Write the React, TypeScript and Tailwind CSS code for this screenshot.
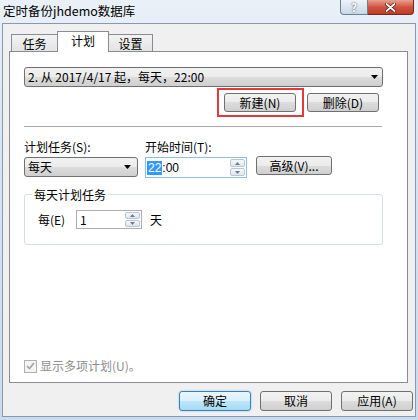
import React from 'react';

const Arrow = () => (
    <svg width="7" height="4" viewBox="0 0 7 4" className="shrink-0">
        <path d="M0 0 H7 L3.5 4 Z" fill="#000" />
    </svg>
);

const Spinner = () => (
    <div className="flex h-full w-[16px] flex-col gap-px py-px pr-px">
        <div className="flex flex-1 items-center justify-center rounded-[2px] border border-[#b9c4d4] bg-[linear-gradient(#f6f8fb,#dfe5ee)]">
            <svg width="5" height="3" viewBox="0 0 5 3"><path d="M0 3 L2.5 0 L5 3 Z" fill="#6a7c98" /></svg>
        </div>
        <div className="flex flex-1 items-center justify-center rounded-[2px] border border-[#b9c4d4] bg-[linear-gradient(#f6f8fb,#dfe5ee)]">
            <svg width="5" height="3" viewBox="0 0 5 3"><path d="M0 0 L2.5 3 L5 0 Z" fill="#6a7c98" /></svg>
        </div>
    </div>
);

const Button = ({ children, className = '', primary = false }: { children: React.ReactNode; className?: string; primary?: boolean }) => (
    <div
        className={`flex w-[72px] items-center justify-center rounded-[3px] border text-[12px] text-black ${
            primary
                ? 'border-[#3c7fb1] bg-[linear-gradient(#eaf6fd_0%,#d9f0fc_50%,#bee6fd_50%,#a7d9f5_100%)] shadow-[0_0_2px_#7cc4f0]'
                : 'border-[#707070] bg-[linear-gradient(#f2f2f2_0%,#ebebeb_50%,#dddddd_50%,#cfcfcf_100%)]'
        } ${className}`}
    >
        {children}
    </div>
);

export default function App() {
    return (
        <div className="flex h-[420px] w-[418px] flex-col overflow-hidden bg-[linear-gradient(180deg,#e9f0f8_0%,#d6e3f1_40%,#c9dbee_100%)] font-['Noto_Sans_CJK_SC',sans-serif] text-[12px] leading-[14px]">
            {/* title bar */}
            <div className="flex h-[23px] shrink-0 items-start justify-between">
                <div className="pl-[3px] pt-[3px] text-[12.5px] leading-[16px] text-black">定时备份jhdemo数据库</div>
                <div className="mr-[4px] flex h-[15px]">
                    <div className="flex w-[28px] items-center justify-center rounded-bl-[4px] border border-t-0 border-[#6f7f92] bg-[linear-gradient(#eef3f9,#c9d7e8)] text-[11px] font-bold leading-none text-white [text-shadow:0_0_2px_#333]">
                        ?
                    </div>
                    <div className="flex w-[46px] items-center justify-center rounded-br-[4px] border border-l-0 border-t-0 border-[#6b2a20] bg-[linear-gradient(#e8a091,#d0533f_50%,#c23b25_100%)]">
                        <svg width="11" height="9" viewBox="0 0 11 9">
                            <path d="M1.5 1 L9.5 8 M9.5 1 L1.5 8" stroke="#3a1a14" strokeWidth="3.2" strokeLinecap="round" />
                            <path d="M1.5 1 L9.5 8 M9.5 1 L1.5 8" stroke="#fff" strokeWidth="1.8" strokeLinecap="round" />
                        </svg>
                    </div>
                </div>
            </div>

            {/* client area */}
            <div className="mb-[3px] ml-[2px] flex w-[414px] flex-1 flex-col border border-[#8899ad] bg-[#f0f0f0]">
                {/* tabs */}
                <div className="ml-[6px] mt-[7px] flex h-[20px] items-end pl-[2px]">
                    <div className="flex h-[17px] w-[47px] items-center justify-center border border-b-0 border-[#898c95] bg-[linear-gradient(#f3f3f3,#e3e3e3)] pt-[2px] text-black">任务</div>
                    <div className="relative z-10 -mb-px -ml-px flex h-[21px] w-[52px] items-center justify-center border border-b-0 border-[#898c95] bg-white pb-[2px] text-black">计划</div>
                    <div className="-ml-px flex h-[17px] w-[45px] items-center justify-center border border-b-0 border-[#898c95] bg-[linear-gradient(#f3f3f3,#e3e3e3)] pt-[2px] text-black">设置</div>
                </div>

                {/* panel */}
                <div className="ml-[6px] flex h-[332px] w-[399px] flex-col border border-[#898c95] bg-white pl-[14px]">
                    <div className="mt-[15px] flex h-[20px] w-[359px] items-center justify-between rounded-[3px] border border-[#707070] bg-[linear-gradient(#f2f2f2_0%,#ebebeb_50%,#dddddd_50%,#cfcfcf_100%)] pl-[3px] pr-[4px]">
                        <span>2. 从 2017/4/17 起，每天，22:00</span>
                        <Arrow />
                    </div>

                    <div className="mt-px flex h-[29px] items-center">
                        <div className="ml-[193px] flex h-[29px] w-[87px] border-2 border-[#e33b3b] pb-[3px] pl-[5px] pr-[6px] pt-[3px]">
                            <Button className="h-[19px]">新建(N)</Button>
                        </div>
                        <Button className="ml-[3px] h-[19px]">删除(D)</Button>
                    </div>

                    <div className="mt-[9px] h-px w-[358px] bg-[#a9a9a9]" />

                    <div className="mt-[13px] flex text-black">
                        <span className="w-[121px]">计划任务(S):</span>
                        <span>开始时间(T):</span>
                    </div>

                    <div className="mt-[3px] flex items-start">
                        <div className="flex h-[20px] w-[114px] items-center justify-between rounded-[3px] border border-[#707070] bg-[linear-gradient(#f2f2f2_0%,#ebebeb_50%,#dddddd_50%,#cfcfcf_100%)] pl-[3px] pr-[6px]">
                            <span>每天</span>
                            <Arrow />
                        </div>
                        <div className="ml-[7px] flex h-[21px] w-[102px] items-center justify-between border border-[#8ebde8] bg-white">
                            <div className="flex items-center pl-[1px] font-['Liberation_Sans',sans-serif] text-[12px]">
                                <span className="bg-[#3399ff] px-px text-white">22</span>
                                <span className="text-black">:00</span>
                            </div>
                            <Spinner />
                        </div>
                        <Button className="-mt-px ml-[9px] h-[19px] w-[76px]">高级(V)...</Button>
                    </div>

                    <div className="relative mt-[16px] h-[51px] w-[359px] rounded-[3px] border border-[#d5dfe5] pl-[13px] pt-[15px]">
                        <span className="absolute -top-[7px] left-[7px] bg-white px-[2px] text-black">每天计划任务</span>
                        <div className="flex items-center">
                            <span className="w-[38px]">每(E)</span>
                            <div className="flex h-[19px] w-[66px] items-center justify-between border border-[#abadb3] bg-white pl-[3px]">
                                <span>1</span>
                                <Spinner />
                            </div>
                            <span className="ml-[8px]">天</span>
                        </div>
                    </div>

                    <div className="mb-[9px] mt-auto flex items-center">
                        <div className="flex h-[13px] w-[13px] items-center justify-center border border-[#b1b1b1] bg-[#f4f4f4]">
                            <svg width="9" height="8" viewBox="0 0 9 8">
                                <path d="M1 4 L3.5 6.5 L8 1" fill="none" stroke="#a3a3a3" strokeWidth="1.6" />
                            </svg>
                        </div>
                        <span className="ml-[3px] text-[#8d8d8d]">显示多项计划(U)。</span>
                    </div>
                </div>

                {/* dialog buttons */}
                <div className="ml-[176px] mt-[8px] flex h-[20px] gap-[9px]">
                    <Button primary>确定</Button>
                    <Button>取消</Button>
                    <Button>应用(A)</Button>
                </div>
            </div>
        </div>
    );
}
